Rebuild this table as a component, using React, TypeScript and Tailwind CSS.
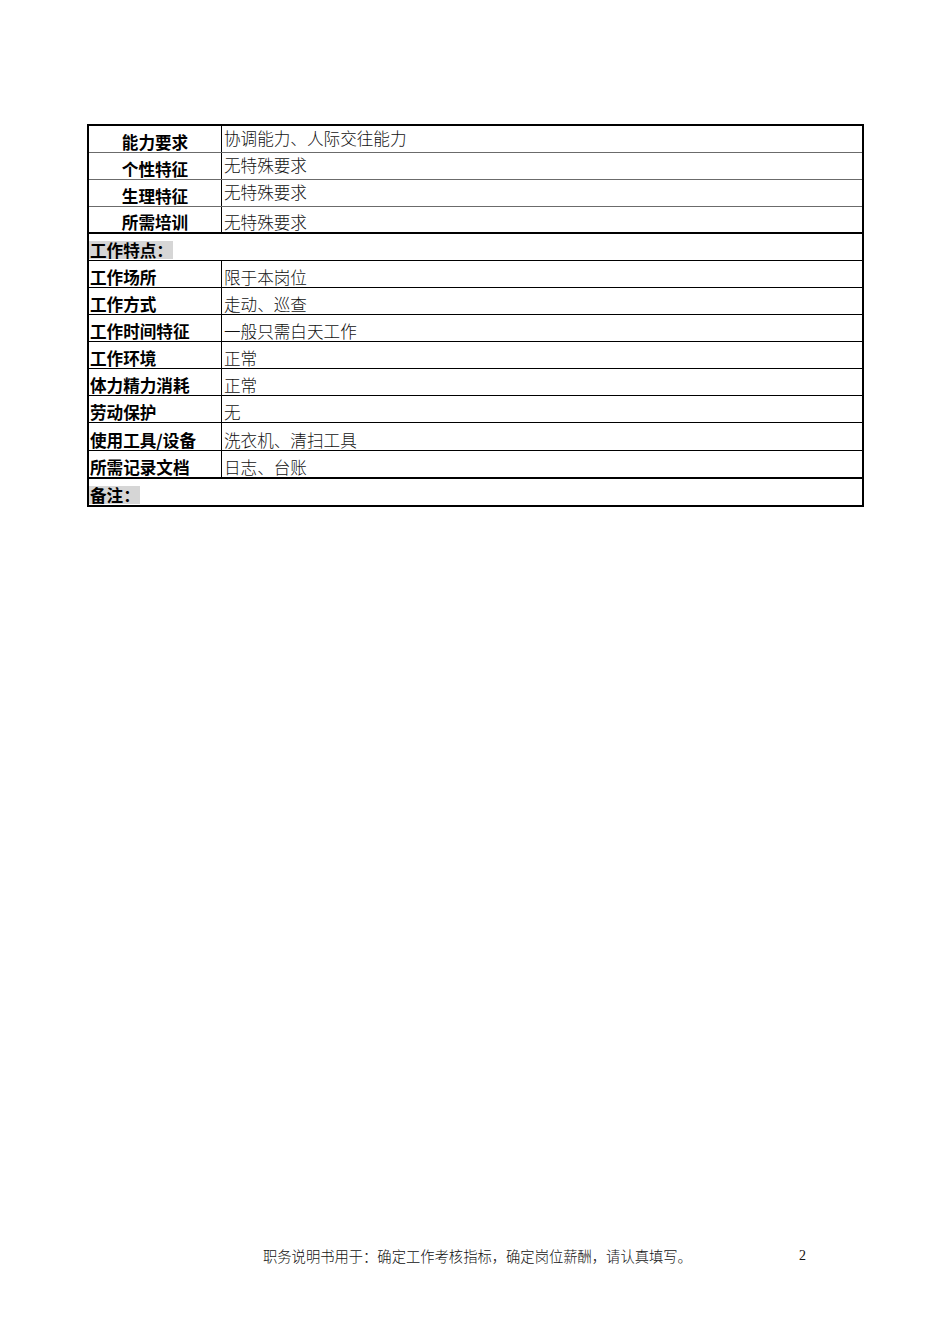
const upper = [
  { label: "能力要求", value: "协调能力、人际交往能力", shift: true },
  { label: "个性特征", value: "无特殊要求", shift: true },
  { label: "生理特征", value: "无特殊要求", shift: true },
  { label: "所需培训", value: "无特殊要求", shift: false },
];

const lower = [
  { label: "工作场所", value: "限于本岗位" },
  { label: "工作方式", value: "走动、巡查" },
  { label: "工作时间特征", value: "一般只需白天工作" },
  { label: "工作环境", value: "正常" },
  { label: "体力精力消耗", value: "正常" },
  { label: "劳动保护", value: "无" },
  { label: "使用工具/设备", value: "洗衣机、清扫工具" },
  { label: "所需记录文档", value: "日志、台账" },
];

const font = "font-['Noto_Sans_CJK_SC',sans-serif]";

export default function App() {
  return (
    <div className={`w-[950px] h-[1344px] bg-white text-black ${font} flex flex-col`}>
      <div className="ml-[87px] mt-[124px] w-[777px] border-2 border-black text-[16.6px] leading-[20px]">
        {upper.map((row, i) => (
          <div
            key={row.label}
            className={`flex h-[27px] ${i === upper.length - 1 ? "border-b-2 border-black" : "border-b border-[#6b6b6b]"}`}
          >
            <div className="w-[133px] border-r border-black flex items-end justify-center font-bold">
              {row.label}
            </div>
            <div className={`flex-1 flex items-end pl-[2px] font-light text-[#111] ${row.shift ? "pb-[4px]" : ""}`}>
              {row.value}
            </div>
          </div>
        ))}

        <div className="flex h-[27px] items-end border-b border-black">
          <span className="bg-[#d6d6d6] font-bold leading-[18px] pl-[1px] mb-[1px]">工作特点：</span>
        </div>

        {lower.map((row, i) => (
          <div
            key={row.label}
            className={`flex ${i >= lower.length - 2 ? "h-[28px]" : "h-[27px]"} ${i === lower.length - 1 ? "border-b-2 border-black" : "border-b border-black"}`}
          >
            <div className="w-[133px] border-r border-black flex items-end pl-[1px] font-bold">
              {row.label}
            </div>
            <div className="flex-1 flex items-end pl-[2px] font-light text-[#111]">{row.value}</div>
          </div>
        ))}

        <div className="flex h-[26px] items-end">
          <span className="bg-[#d6d6d6] font-bold leading-[18px] pl-[1px] mb-[1px]">备注：</span>
        </div>
      </div>

      <div className="mt-[740px] flex items-center text-[14.3px] leading-[18px] text-[#111] font-light">
        <span className="ml-[263px]">职务说明书用于：确定工作考核指标，确定岗位薪酬，请认真填写。</span>
        <span className="ml-auto mr-[144px] font-['Liberation_Serif',serif] text-[14px]">2</span>
      </div>
    </div>
  );
}
